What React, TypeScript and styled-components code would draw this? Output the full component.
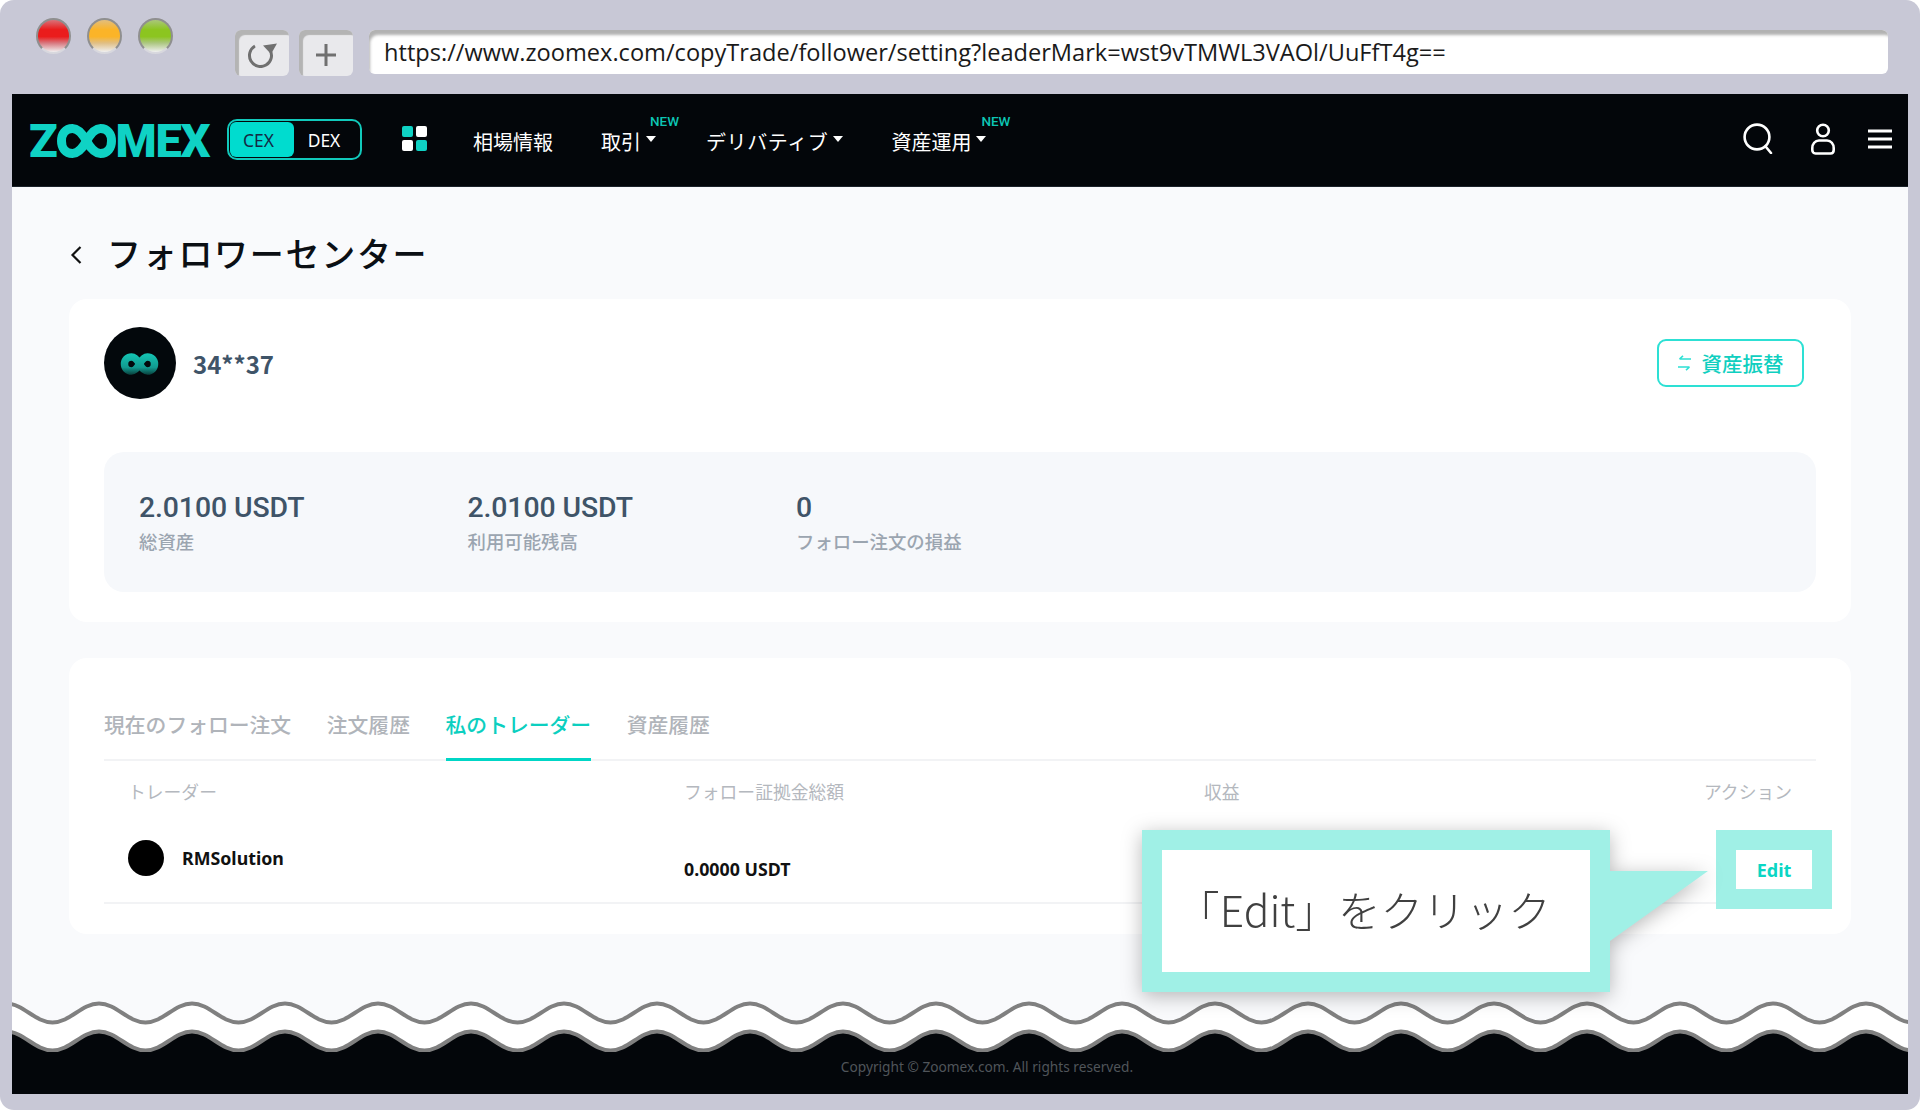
import React from 'react';
import styled, { createGlobalStyle } from 'styled-components';

const CJK = `"Noto Sans", "Noto Sans CJK JP", sans-serif`;

const Global = createGlobalStyle`
  html, body { margin: 0; padding: 0; background: #fff; }
  body { font-family: ${CJK}; }
  * { box-sizing: border-box; }
`;

const Frame = styled.div`
  width: 1920px; height: 1110px; background: #c8c8d6; border-radius: 14px;
  padding: 0 12px 16px; display: flex; flex-direction: column; overflow: hidden;
`;
const Chrome = styled.div`
  height: 94px; flex: none; display: flex; align-items: flex-start; margin-right: 20px;
`;
const Lights = styled.div`
  display: flex; gap: 16px; margin: 18px 0 0 24px;
`;
const Light = styled.div<{ $c: string }>`
  width: 35px; height: 36px; border-radius: 50%; border: 2px solid #8f8f8f;
  border-bottom-color: #d8d8de;
  background: linear-gradient(to bottom, ${p => p.$c}80 0%, ${p => p.$c} 30%, ${p => p.$c} 52%, ${p => p.$c}77 72%, #f0f0f0 100%);
`;
const ChromeBtn = styled.div<{ $ml: number }>`
  width: 54px; height: 46px; margin: 30px 0 0 ${p => p.$ml}px; border-radius: 6px; background: #e9e9ec;
  box-shadow: inset 4px 5px 1px #b4b4b4; display: flex; align-items: center; justify-content: center; padding-top: 4px;
`;
const UrlBar = styled.div`
  flex: 1; height: 44px; margin: 30px 0 0 16px; border-radius: 6px; background: #fff;
  box-shadow: inset 3px 7px 3px -2px #b2b2b2; padding: 5px 0 0 15px;
  font-family: "Open Sans", sans-serif; font-size: 23.6px; color: #1a1a1a; line-height: 34px; white-space: nowrap;
`;

const Window = styled.div`
  flex: 1; display: flex; flex-direction: column; background: #f9fafc; min-height: 0;
`;

const Nav = styled.nav`
  height: 93px; flex: none; background: #03060a; border-bottom: 1px solid #1b222a;
  display: flex; align-items: center; padding: 0 16px 0 17px; color: #fff;
`;
const Logo = styled.div`
  display: flex; align-items: center; width: 182px; height: 34px; color: #0fd2c4; margin-top: 1px; flex: none;
  font-family: Roboto, sans-serif; font-weight: 900; font-size: 47px; line-height: 34px; letter-spacing: -1.2px;
`;
const Toggle = styled.div`
  margin-left: 16px; width: 135px; height: 41px; border: 2px solid #11c9bb; border-radius: 10px;
  display: flex; padding: 1px; margin-top: -1px;
  font-family: "Noto Sans", sans-serif; font-size: 17.4px; flex: none;
`;
const ToggleOpt = styled.div<{ $on?: boolean }>`
  border-radius: 6px; display: flex; align-items: center; justify-content: center;
  ${p => (p.$on ? 'width: 64px; padding-right: 7px; background: #00dccf; color: #142a45;' : 'flex: 1; padding-right: 5px; color: #fff;')}
`;
const GridIcon = styled.svg`
  margin-left: 40px; width: 25px; height: 25px; flex: none; margin-top: -3px;
`;
const NavItem = styled.div<{ $ml: number; $ls?: number }>`
  position: relative; display: flex; align-items: center; margin-left: ${p => p.$ml}px;
  font-family: "Noto Sans CJK JP", sans-serif; font-size: 20px; line-height: 28px; color: #fff; white-space: nowrap;
  padding-top: 4px; letter-spacing: ${p => p.$ls ?? 0}px;
`;
const Caret = styled.span`
  width: 0; height: 0; margin: -6px 0 0 5px; border-left: 5px solid transparent; border-right: 5px solid transparent;
  border-top: 6px solid #fff;
`;
const NewTag = styled.span<{ $l: number }>`
  position: absolute; left: ${p => p.$l}px; top: -9px; font-family: Roboto, sans-serif; font-size: 13.5px; line-height: 13px;
  font-weight: 500; color: #0cc5b4; letter-spacing: 0;
`;
const NavRight = styled.div`
  margin-left: auto; display: flex; align-items: center; margin-top: -3px;
`;
const SearchIcon = styled.svg`
  display: block; flex: none;
`;
const UserIcon = styled.svg`
  display: block; flex: none; margin: 0 33px 0 38px;
`;
const MenuIcon = styled.svg`
  display: block; flex: none;
`;

const Main = styled.main`
  flex: 1; min-height: 0; padding: 0 57px; position: relative;
`;
const TitleRow = styled.div`
  height: 112px; display: flex; align-items: center; padding: 19px 0 0 1px;
`;
const BackIcon = styled.svg`
  width: 12px; height: 20px; flex: none; margin-top: 4px;
`;
const Title = styled.h1`
  margin: 0 0 0 25px; font-family: "Noto Sans CJK JP", sans-serif; font-weight: 500; font-size: 34px; letter-spacing: 1.7px;
  line-height: 46px; color: #0b0f14;
`;
const Card = styled.section`
  position: relative; background: #fff; border-radius: 18px; padding: 0 35px; margin-bottom: 36px;
`;
const ProfileCard = styled(Card)`
  height: 323px; padding-top: 28px;
`;
const TradersCard = styled(Card)`
  height: 276px;
`;
const ProfileRow = styled.div`
  display: flex; align-items: center; padding-right: 12px;
`;
const AvatarSvg = styled.svg`
  width: 72px; height: 72px; flex: none; display: block;
`;
const UserName = styled.div`
  margin-left: 17px; font-family: "Noto Sans CJK JP", sans-serif; font-weight: 700; font-size: 24px; color: #3f5468;
`;
const TransferBtn = styled.button`
  margin-left: auto; width: 147px; height: 48px; border: 2px solid #2de0d4; border-radius: 9px; background: #fff;
  display: flex; align-items: center; justify-content: center; gap: 11px; padding: 0;
  font-family: "Noto Sans CJK JP", sans-serif; font-size: 20.5px; font-weight: 500; color: #0fcfc0;
`;
const Panel = styled.div`
  margin-top: 53px; height: 140px; border-radius: 20px; background: #f6f8fb; padding: 35px 0 0 35px;
  display: grid; grid-template-columns: 328.5px 328.5px 1fr;
`;
const Stat = styled.div`
  display: flex; flex-direction: column;
`;
const StatValue = styled.div`
  font-family: Roboto, sans-serif; font-weight: 500; font-size: 28.4px; line-height: 41px; color: #3f5468; letter-spacing: -0.1px;
`;
const StatLabel = styled.div`
  font-family: "Noto Sans CJK JP", sans-serif; font-weight: 500; font-size: 18.4px; line-height: 26px; color: #9ba5b0;
`;
const Tabs = styled.div`
  height: 103px; display: flex; align-items: flex-end; gap: 35.6px; border-bottom: 2px solid #f2f3f5;
`;
const Tab = styled.div<{ $on?: boolean }>`
  height: 52px; margin-bottom: -2px; font-family: "Noto Sans CJK JP", sans-serif; font-weight: 500; font-size: 20.8px; line-height: 30px;
  color: ${p => (p.$on ? '#0ccfc0' : '#b0b4ba')}; border-bottom: 3px solid ${p => (p.$on ? '#00d6c6' : 'transparent')};
  white-space: nowrap;
`;
const TableHead = styled.div`
  display: grid; grid-template-columns: 556px 520px 1fr auto; padding: 0 24px; height: 60px; align-items: center;
  font-family: "Noto Sans CJK JP", sans-serif; font-size: 17.8px; color: #b4b8be;
`;
const TableRow = styled.div`
  display: grid; grid-template-columns: 556px 520px 1fr auto; padding: 0 4px 0 24px; height: 83px; border-bottom: 2px solid #f2f3f5;
`;
const TraderCell = styled.div`
  display: flex; align-items: center; gap: 18px; height: 74px;
  font-family: "Noto Sans", "Noto Sans CJK JP", sans-serif; font-weight: 700; font-size: 17.8px; color: #111;
`;
const Dot = styled.div`
  width: 36px; height: 36px; border-radius: 50%; background: #000; flex: none;
`;
const Amount = styled.div`
  display: flex; align-items: center; height: 96px; font-family: "Noto Sans", "Noto Sans CJK JP", sans-serif; font-weight: 700; font-size: 17.8px; color: #111;
`;
const EditCell = styled.div`
  display: flex; justify-content: flex-end; padding-top: 29px; position: relative;
`;
const EditBtn = styled.div`
  width: 76px; height: 39px; background: #fff; outline: 20px solid #a0f0e6; display: flex; align-items: center; justify-content: center;
  font-family: "Noto Sans", sans-serif; font-weight: 700; font-size: 18px; color: #0ad6c4;
`;
const Callout = styled.div`
  position: absolute; left: 1073px; top: 172px; width: 468px; height: 162px; filter: drop-shadow(0 4px 10px rgba(0,0,0,.28));
`;
const CalloutBox = styled.div`
  width: 100%; height: 100%; background: #fff; border: 20px solid #a0f0e6; display: flex; align-items: center; justify-content: center;
  padding: 0 24px 6px 0; font-family: "Noto Sans CJK JP", sans-serif; font-weight: 300; font-size: 42.6px; color: #404040; white-space: nowrap;
`;
const CalloutTail = styled.svg`
  position: absolute; left: 468px; top: 41px; width: 98px; height: 70px;
`;
const Tear = styled.svg`
  display: block; width: 1896px; height: 54px; flex: none;
`;
const Footer = styled.footer`
  height: 42px; flex: none; background: #03060a; text-align: center; padding: 4px 0 0 54px;
  font-family: "Noto Sans", sans-serif; font-size: 13.7px; line-height: 22px; color: #50555a; margin-top: -1px;
`;

function wave(y0: number, amp: number, width: number) {
  const period = 93;
  const half = period / 2;
  let x = -6 - period;
  let d = `M ${x} ${y0 - amp}`;
  let down = true;
  while (x < width + period) {
    const ny = down ? y0 + amp : y0 - amp;
    const oy = down ? y0 - amp : y0 + amp;
    d += ` C ${x + half * 0.38} ${oy}, ${x + half * 0.62} ${ny}, ${x + half} ${ny}`;
    x += half;
    down = !down;
  }
  return { d, end: x };
}

const TornEdge = () => {
  const a = wave(14, 9.5, 1896);
  const b = wave(42, 9.5, 1896);
  return (
    <Tear viewBox="0 0 1896 54">
      <rect width="1896" height="54" fill="#f9fafc" />
      <path d={`${a.d} L ${a.end} 54 L -200 54 Z`} fill="#fff" />
      <path d={`${b.d} L ${b.end} 60 L -200 60 Z`} fill="#03060a" />
      <path d={a.d} fill="none" stroke="#808080" strokeWidth="4" />
      <path d={b.d} fill="none" stroke="#808080" strokeWidth="4" />
    </Tear>
  );
};

const LogoLoop = styled.svg`
  display: block; flex: none; width: 59px; height: 34px;
`;

export default function App() {
  return (
    <>
      <Global />
      <Frame>
        <Chrome>
          <Lights>
            <Light $c="#ea1c1c" />
            <Light $c="#fbb428" />
            <Light $c="#8cc520" />
          </Lights>
          <ChromeBtn $ml={62}>
            <svg width="32" height="26" viewBox="0 0 32 26" fill="none" stroke="#707070" strokeWidth="3">
              <path d="M9 4 A11 11 0 1 0 24 8" />
              <path d="M17 3.5 L31 1.5 L25 12" strokeWidth="3" fill="#707070" stroke="none" />
            </svg>
          </ChromeBtn>
          <ChromeBtn $ml={10}>
            <svg width="20" height="22" viewBox="0 0 20 22" stroke="#707070" strokeWidth="3">
              <path d="M10 0 V22 M0 11 H20" />
            </svg>
          </ChromeBtn>
          <UrlBar>https://www.zoomex.com/copyTrade/follower/setting?leaderMark=wst9vTMWL3VAOl/UuFfT4g==</UrlBar>
        </Chrome>
        <Window>
          <Nav>
            <Logo>
              <span>Z</span>
              <LogoLoop viewBox="0 0 59 34">
                <path
                  d="M29.5 17 C25 9 21 4.5 15.5 4.5 C8.5 4.5 4.5 10 4.5 17 C4.5 24 8.5 29.5 15.5 29.5 C21 29.5 25 25 29.5 17 C34 9 38 4.5 43.5 4.5 C50.5 4.5 54.5 10 54.5 17 C54.5 24 50.5 29.5 43.5 29.5 C38 29.5 34 25 29.5 17 Z"
                  fill="none"
                  stroke="#0fd2c4"
                  strokeWidth="9"
                />
              </LogoLoop>
              <span>MEX</span>
            </Logo>
            <Toggle>
              <ToggleOpt $on>CEX</ToggleOpt>
              <ToggleOpt>DEX</ToggleOpt>
            </Toggle>
            <GridIcon viewBox="0 0 25 25">
              <rect x="0" y="0" width="11" height="11" rx="2" fill="#0fd2c4" />
              <rect x="14" y="0" width="11" height="11" rx="2" fill="#fff" />
              <rect x="0" y="14" width="11" height="11" rx="2" fill="#fff" />
              <rect x="14" y="14" width="11" height="11" rx="2" fill="#0fd2c4" />
            </GridIcon>
            <NavItem $ml={46}>相場情報</NavItem>
            <NavItem $ml={48}>
              取引<Caret />
              <NewTag $l={49}>NEW</NewTag>
            </NavItem>
            <NavItem $ml={50} $ls={0.6}>
              デリバティブ<Caret />
            </NavItem>
            <NavItem $ml={48}>
              資産運用<Caret />
              <NewTag $l={90}>NEW</NewTag>
            </NavItem>
            <NavRight>
              <SearchIcon width="30" height="31" viewBox="0 0 30 31" fill="none" stroke="#fff" strokeWidth="2.6" strokeLinecap="round">
                <circle cx="14" cy="14" r="12.4" />
                <path d="M23 24 L28 30" />
              </SearchIcon>
              <UserIcon width="24" height="32" viewBox="0 0 24 32" fill="none" stroke="#fff" strokeWidth="2.6">
                <circle cx="12" cy="7.5" r="5.8" />
                <path d="M8 17.5 H16 C20 17.5 22.7 21 22.7 25 V27 C22.7 29 21.5 30.5 19.5 30.5 H4.5 C2.5 30.5 1.3 29 1.3 27 V25 C1.3 21 4 17.5 8 17.5 Z" />
              </UserIcon>
              <MenuIcon width="24" height="20" viewBox="0 0 24 20" fill="none" stroke="#fff" strokeWidth="2.8">
                <path d="M0 2 H24 M0 10 H24 M0 18 H24" />
              </MenuIcon>
            </NavRight>
          </Nav>
          <Main>
            <TitleRow>
              <BackIcon viewBox="0 0 12 20" fill="none" stroke="#111" strokeWidth="2.2">
                <path d="M10.5 2 L2.5 10 L10.5 18" />
              </BackIcon>
              <Title>フォロワーセンター</Title>
            </TitleRow>
            <ProfileCard>
              <ProfileRow>
                <AvatarSvg viewBox="0 0 72 72">
                  <defs>
                    <linearGradient id="avg" gradientUnits="userSpaceOnUse" x1="0" y1="26" x2="0" y2="50">
                      <stop offset="0" stopColor="#14c6b5" />
                      <stop offset="0.6" stopColor="#119a90" />
                      <stop offset="1" stopColor="#062322" />
                    </linearGradient>
                  </defs>
                  <circle cx="36" cy="36" r="36" fill="#03080c" />
                  <path
                    d="M35.5 37 C33 32.5 31 30 27.5 30 C23.5 30 20.5 33 20.5 37 C20.5 41 23.5 44 27.5 44 C31 44 33 41.5 35.5 37 C38 32.5 40 30 43.5 30 C47.5 30 50.5 33 50.5 37 C50.5 41 47.5 44 43.5 44 C40 44 38 41.5 35.5 37 Z"
                    fill="none"
                    stroke="url(#avg)"
                    strokeWidth="7.5"
                  />
                </AvatarSvg>
                <UserName>34**37</UserName>
                <TransferBtn>
                  <svg width="13" height="16" viewBox="0 0 13 16" fill="none" stroke="#2de0d4" strokeWidth="1.6">
                    <path d="M13 4 H1.5 M5 0.8 L1.5 4" />
                    <path d="M0 12 H11.5 M8 15.2 L11.5 12" />
                  </svg>
                  資産振替
                </TransferBtn>
              </ProfileRow>
              <Panel>
                <Stat>
                  <StatValue>2.0100 USDT</StatValue>
                  <StatLabel>総資産</StatLabel>
                </Stat>
                <Stat>
                  <StatValue>2.0100 USDT</StatValue>
                  <StatLabel>利用可能残高</StatLabel>
                </Stat>
                <Stat>
                  <StatValue>0</StatValue>
                  <StatLabel>フォロー注文の損益</StatLabel>
                </Stat>
              </Panel>
            </ProfileCard>
            <TradersCard>
              <Tabs>
                <Tab>現在のフォロー注文</Tab>
                <Tab>注文履歴</Tab>
                <Tab $on>私のトレーダー</Tab>
                <Tab>資産履歴</Tab>
              </Tabs>
              <TableHead>
                <div>トレーダー</div>
                <div>フォロー証拠金総額</div>
                <div>収益</div>
                <div>アクション</div>
              </TableHead>
              <TableRow>
                <TraderCell>
                  <Dot />
                  RMSolution
                </TraderCell>
                <Amount>0.0000 USDT</Amount>
                <div />
                <EditCell>
                  <EditBtn>Edit</EditBtn>
                </EditCell>
              </TableRow>
              <Callout>
                <CalloutBox>「Edit」をクリック</CalloutBox>
                <CalloutTail viewBox="0 0 98 70">
                  <path d="M0 0 H98 L0 70 Z" fill="#a0f0e6" />
                </CalloutTail>
              </Callout>
            </TradersCard>
          </Main>
          <TornEdge />
          <Footer>Copyright © Zoomex.com. All rights reserved.</Footer>
        </Window>
      </Frame>
    </>
  );
}
